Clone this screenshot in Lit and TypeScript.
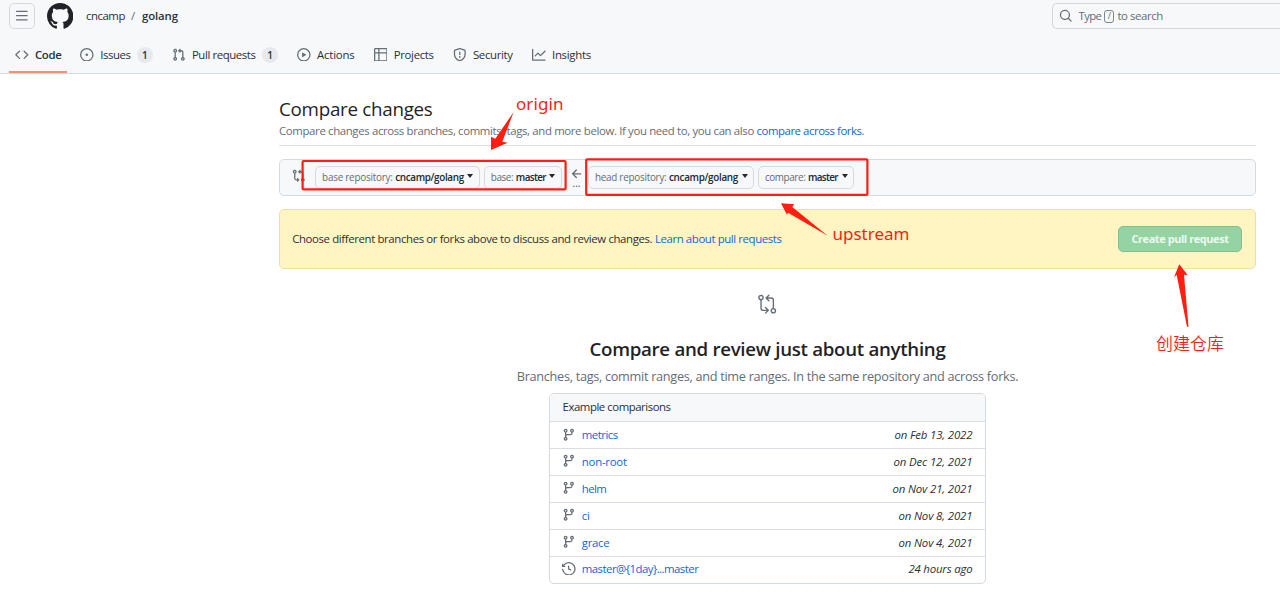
import { LitElement, html, css, svg } from "lit";
import { customElement, property } from "lit/decorators.js";

const ICONS: Record<string, string> = {
  bars: "M1 2.75A.75.75 0 0 1 1.75 2h12.5a.75.75 0 0 1 0 1.5H1.75A.75.75 0 0 1 1 2.75Zm0 5A.75.75 0 0 1 1.75 7h12.5a.75.75 0 0 1 0 1.5H1.75A.75.75 0 0 1 1 7.75ZM1.75 12h12.5a.75.75 0 0 1 0 1.5H1.75a.75.75 0 0 1 0-1.5Z",
  mark: "M8 0c4.42 0 8 3.58 8 8a8.013 8.013 0 0 1-5.45 7.59c-.4.08-.55-.17-.55-.38 0-.27.01-1.13.01-2.2 0-.75-.25-1.23-.54-1.48 1.78-.2 3.65-.88 3.65-3.95 0-.88-.31-1.59-.82-2.15.08-.2.36-1.02-.08-2.12 0 0-.67-.22-2.2.82-.64-.18-1.32-.27-2-.27-.68 0-1.36.09-2 .27-1.53-1.03-2.2-.82-2.2-.82-.44 1.1-.16 1.92-.08 2.12-.51.56-.82 1.28-.82 2.15 0 3.06 1.86 3.75 3.64 3.95-.23.2-.44.55-.51 1.07-.46.21-1.61.55-2.33-.66-.15-.24-.6-.83-1.23-.82-.67.01-.27.38.01.53.34.19.73.9.82 1.13.16.45.68 1.31 2.69.94 0 .67.01 1.3.01 1.49 0 .21-.15.45-.55.38A7.995 7.995 0 0 1 0 8c0-4.42 3.58-8 8-8Z",
  code: "M4.72 3.22a.75.75 0 0 1 1.06 1.06L2.06 8l3.72 3.72a.75.75 0 1 1-1.06 1.06L.47 8.53a.75.75 0 0 1 0-1.06l4.25-4.25zm6.56 0a.75.75 0 1 0-1.06 1.06L13.94 8l-3.72 3.72a.75.75 0 1 0 1.06 1.06l4.25-4.25a.75.75 0 0 0 0-1.06l-4.25-4.25z",
  issue: "M8 9.5a1.5 1.5 0 1 0 0-3 1.5 1.5 0 0 0 0 3ZM8 0a8 8 0 1 1 0 16A8 8 0 0 1 8 0ZM1.5 8a6.5 6.5 0 1 0 13 0 6.5 6.5 0 0 0-13 0Z",
  pull: "M1.5 3.25a2.25 2.25 0 1 1 3 2.122v5.256a2.251 2.251 0 1 1-1.5 0V5.372A2.25 2.25 0 0 1 1.5 3.25Zm5.677-.177L9.573.677A.25.25 0 0 1 10 .854V2.5h1A2.5 2.5 0 0 1 13.5 5v5.628a2.251 2.251 0 1 1-1.5 0V5a1 1 0 0 0-1-1h-1v1.646a.25.25 0 0 1-.427.177L7.177 3.427a.25.25 0 0 1 0-.354ZM3.75 2.5a.75.75 0 1 0 0 1.5.75.75 0 0 0 0-1.5Zm0 9.5a.75.75 0 1 0 0 1.5.75.75 0 0 0 0-1.5Zm8.25.75a.75.75 0 1 0 1.5 0 .75.75 0 0 0-1.5 0Z",
  play: "M8 0a8 8 0 1 1 0 16A8 8 0 0 1 8 0ZM1.5 8a6.5 6.5 0 1 0 13 0 6.5 6.5 0 0 0-13 0Zm4.879-2.773 4.264 2.559a.25.25 0 0 1 0 .428l-4.264 2.559A.25.25 0 0 1 6 10.559V5.442a.25.25 0 0 1 .379-.215Z",
  table: "M0 1.75C0 .784.784 0 1.75 0h12.5C15.216 0 16 .784 16 1.75v12.5A1.75 1.75 0 0 1 14.25 16H1.75A1.75 1.75 0 0 1 0 14.25ZM6.5 6.5v8h7.75a.25.25 0 0 0 .25-.25V6.5Zm8-1.5V1.75a.25.25 0 0 0-.25-.25H6.5V5Zm-13 1.5v7.75c0 .138.112.25.25.25H5v-8ZM5 5V1.5H1.75a.25.25 0 0 0-.25.25V5Z",
  shield: "M7.467.133a1.748 1.748 0 0 1 1.066 0l5.25 1.68A1.75 1.75 0 0 1 15 3.48V7c0 1.566-.32 3.182-1.303 4.682-.983 1.498-2.585 2.813-5.032 3.855a1.697 1.697 0 0 1-1.33 0c-2.447-1.042-4.049-2.357-5.032-3.855C1.32 10.182 1 8.566 1 7V3.48a1.75 1.75 0 0 1 1.217-1.667Zm.61 1.429a.25.25 0 0 0-.153 0l-5.25 1.68a.25.25 0 0 0-.174.238V7c0 1.358.275 2.666 1.057 3.86.784 1.194 2.121 2.34 4.366 3.297a.196.196 0 0 0 .154 0c2.245-.956 3.582-2.104 4.366-3.298C13.225 9.666 13.5 8.36 13.5 7V3.48a.251.251 0 0 0-.174-.237l-5.25-1.68ZM8.75 4.75v3a.75.75 0 0 1-1.5 0v-3a.75.75 0 0 1 1.5 0ZM9 10.5a1 1 0 1 1-2 0 1 1 0 0 1 2 0Z",
  graph: "M1.5 1.75V13.5h13.75a.75.75 0 0 1 0 1.5H.75a.75.75 0 0 1-.75-.75V1.75a.75.75 0 0 1 1.5 0Zm14.28 2.53-5.25 5.25a.75.75 0 0 1-1.06 0L7 7.06 4.28 9.78a.751.751 0 0 1-1.042-.018.751.751 0 0 1-.018-1.042l3.25-3.25a.75.75 0 0 1 1.06 0L10 7.94l4.72-4.72a.751.751 0 0 1 1.042.018.751.751 0 0 1 .018 1.042Z",
  search: "M10.68 11.74a6 6 0 0 1-7.922-8.982 6 6 0 0 1 8.982 7.922l3.04 3.04a.749.749 0 0 1-.326 1.275.749.749 0 0 1-.734-.215ZM11.5 7a4.499 4.499 0 1 0-8.997 0A4.499 4.499 0 0 0 11.5 7Z",
  compare: "M9.573.677A.25.25 0 0 1 10 .854V2.5h1A2.5 2.5 0 0 1 13.5 5v5.628a2.251 2.251 0 1 1-1.5 0V5a1 1 0 0 0-1-1h-1v1.646a.25.25 0 0 1-.427.177L7.177 3.427a.25.25 0 0 1 0-.354ZM6 12v-1.646a.25.25 0 0 1 .427-.177l2.396 2.396a.25.25 0 0 1 0 .354l-2.396 2.396A.25.25 0 0 1 6 15.146V13.5H5A2.5 2.5 0 0 1 2.5 11V5.372a2.25 2.25 0 1 1 1.5 0V11a1 1 0 0 0 1 1ZM4 3.25a.75.75 0 1 0-1.5 0 .75.75 0 0 0 1.5 0ZM12.75 12a.75.75 0 1 0 0 1.5.75.75 0 0 0 0-1.5Z",
  branch: "M9.5 3.25a2.25 2.25 0 1 1 3 2.122V6A2.5 2.5 0 0 1 10 8.5H6a1 1 0 0 0-1 1v1.128a2.251 2.251 0 1 1-1.5 0V5.372a2.25 2.25 0 1 1 1.5 0v1.836A2.493 2.493 0 0 1 6 7h4a1 1 0 0 0 1-1v-.628A2.25 2.25 0 0 1 9.5 3.25Zm-6 0a.75.75 0 1 0 1.5 0 .75.75 0 0 0-1.5 0Zm8.25-.75a.75.75 0 1 0 0 1.5.75.75 0 0 0 0-1.5ZM4.25 12a.75.75 0 1 0 0 1.5.75.75 0 0 0 0-1.5Z",
  history: "m.427 1.927 1.215 1.215a8.002 8.002 0 1 1-1.6 5.685.75.75 0 1 1 1.493-.154 6.5 6.5 0 1 0 1.18-4.458l1.358 1.358A.25.25 0 0 1 3.896 6H.25A.25.25 0 0 1 0 5.75V2.104a.25.25 0 0 1 .427-.177ZM7.75 4a.75.75 0 0 1 .75.75v2.992l2.028.812a.75.75 0 0 1-.557 1.392l-2.5-1A.751.751 0 0 1 7 8.25v-3.5A.75.75 0 0 1 7.75 4Z",
  left: "M7.78 12.53a.75.75 0 0 1-1.06 0L2.47 8.28a.75.75 0 0 1 0-1.06l4.25-4.25a.751.751 0 0 1 1.042.018.751.751 0 0 1 .018 1.042L4.81 7h7.44a.75.75 0 0 1 0 1.5H4.81l2.97 2.97a.75.75 0 0 1 0 1.06Z",
};

const icon = (name: string, size = 13.6) =>
  html`<svg class="icon" width=${size} height=${size} viewBox="0 0 16 16" fill="currentColor">${svg`<path fill-rule="evenodd" d=${ICONS[name]}></path>`}</svg>`;

/** One line of text, tracked so that it fills exactly `w` pixels. */
@customElement("fit-text")
export class FitText extends LitElement {
  static styles = css`
    :host { display: inline-block; flex: none; white-space: pre; }
  `;
  @property() text = "";
  @property({ type: Number }) w = 0;

  render() {
    return html`<span>${this.text}</span>`;
  }
  updated() {
    const span = this.renderRoot.querySelector("span")!;
    span.style.letterSpacing = "0px";
    const natural = span.getBoundingClientRect().width;
    span.style.letterSpacing = `${(this.w - natural) / this.text.length}px`;
    this.style.width = `${this.w}px`;
  }
}

const t = (text: string, w: number, cls = "") =>
  html`<fit-text class=${cls} .text=${text} .w=${w}></fit-text>`;

const TABS = [
  { icon: "code", label: "Code", w: 26.4, active: true },
  { icon: "issue", label: "Issues", w: 30, count: "1" },
  { icon: "pull", label: "Pull requests", w: 63.7, count: "1" },
  { icon: "play", label: "Actions", w: 37.4 },
  { icon: "table", label: "Projects", w: 40 },
  { icon: "shield", label: "Security", w: 39.8 },
  { icon: "graph", label: "Insights", w: 39 },
];

const EXAMPLES = [
  { icon: "branch", name: "metrics", w: 36, when: "on Feb 13, 2022", ww: 78 },
  { icon: "branch", name: "non-root", w: 45, when: "on Dec 12, 2021", ww: 79 },
  { icon: "branch", name: "helm", w: 24.5, when: "on Nov 21, 2021", ww: 80 },
  { icon: "branch", name: "ci", w: 8, when: "on Nov 8, 2021", ww: 74 },
  { icon: "branch", name: "grace", w: 27.5, when: "on Nov 4, 2021", ww: 74 },
  { icon: "history", name: "master@{1day}...master", w: 116.5, when: "24 hours ago", ww: 64 },
];

@customElement("app-root")
export class AppRoot extends LitElement {
  static styles = css`
    :host {
      display: block; position: relative; width: 1280px; height: 609px; overflow: hidden;
      background: #fff; color: #2b3036;
      font: 11.4px/18px "Open Sans", "Noto Sans", sans-serif;
    }
    * { box-sizing: border-box; }
    .icon { flex: none; display: block; }
    header { height: 74px; background: #f6f8fa; border-bottom: 1px solid #d5dbe1; display: flex; flex-direction: column; }
    .top { height: 32px; display: flex; align-items: center; padding-left: 8.8px; overflow: hidden; }
    .menu { width: 25.8px; height: 25.8px; border: 1px solid #d3d9e0; border-radius: 5px; display: grid; place-items: center; color: #656d76; }
    .logo { margin-left: 12.4px; margin-right: 12.6px; color: #1f2328; }
    .slash { margin: 0 6px; color: #656d76; }
    .bold { font-weight: 600; }
    .search { margin-left: auto; width: 227.6px; flex: none; height: 26px; border: 1px solid #d0d7de; border-right: 0; border-radius: 5px 0 0 5px; display: flex; align-items: center; padding-left: 5.8px; color: #656d76; }
    .search .icon { margin-right: 5.8px; }
    .kbd { width: 10px; height: 13px; margin: 0 3px; border: 1px solid #7d858e; border-radius: 3px; display: grid; place-items: center; font-size: 9px; line-height: 10px; }
    nav { height: 41px; display: flex; padding-left: 9px; }
    .tab { display: flex; align-items: center; gap: 6.4px; margin-right: 13.25px; padding: 4px 0 0 6px; height: 41px; }
    .tab .icon { color: #656d76; }
    .tab.active { border-bottom: 2px solid #fd8c73; padding-right: 6px; padding-top: 6px; margin-right: 7px; font-weight: 600; }
    .count { width: 15.6px; height: 16px; border-radius: 8px; background: #e6eaef; text-align: center; font-size: 10px; line-height: 16px; font-weight: 600; margin-left: .3px; }
    main { margin-left: 279px; width: 977px; padding-top: 21px; display: flex; flex-direction: column; }
    h1, h2, p { margin: 0; font-weight: 400; }
    h1 { font-size: 18.8px; line-height: 28px; height: 28px; color: #1f2328; }
    .sub { color: #656d76; height: 23px; line-height: 16px; border-bottom: 1px solid #dce1e6; display: flex; }
    .link { color: #0f66dc; }
    .range { margin-top: 13px; height: 37px; border: 1px solid #d3dae0; border-radius: 5px; background: #f6f8fa; display: flex; align-items: center; padding-left: 12.4px; color: #656d76; }
    .range > .icon { margin-top: -4px; }
    .pick { height: 23px; border: 1px solid #d6dae0; border-radius: 5px; display: flex; align-items: center; padding: 0 5.8px; font-size: 9.9px; line-height: 19px; margin-right: 3.8px; }
    .pick fit-text { margin-top: -1px; }
    .pick .bold { color: #24292f; margin-left: 2.6px; }
    .pick.first { margin-left: 9.3px; }
    .pick::after { content: ""; border: 3.7px solid transparent; border-top: 4px solid #24292f; border-bottom: 0; margin-left: 3.5px; position: relative; top: -1.5px; }
    .dir { width: 22.2px; padding-right: 1px; display: flex; flex-direction: column; align-items: center; height: 22px; }
    .dots { line-height: 8px; font-size: 10px; height: 12px; color: #424a53; margin-top: -2px; }
    .flash { margin-top: 13px; height: 60px; border: 1px solid #f0e0a0; border-radius: 5px; background: #fff5c2; display: flex; align-items: center; padding: 0 13px 0 12.2px; }
    .flash .link { margin-left: 2.8px; }
    .create { margin-left: auto; width: 124px; height: 26px; border: 1px solid #84bf91; border-radius: 5px; background: #94d3a2; color: #edf9f0; display: grid; place-items: center; font: 700 11px/18px "Open Sans", sans-serif; padding: 0 0 1px; }
    .blank { display: flex; flex-direction: column; align-items: center; padding-top: 25px; color: #656d76; }
    h2 { margin-top: 20px; font-size: 18.7px; line-height: 30px; font-weight: 600; color: #1f2328; }
    .lead { margin-top: 2px; font-size: 12.7px; line-height: 20px; }
    .list { width: 437px; height: 191px; margin-top: 7px; border: 1px solid #d3dae0; border-radius: 5px; color: #2b3036; display: grid; grid-template-rows: 27px repeat(4, 27px 26.6px) ; grid-auto-rows: 27px; overflow: hidden; }
    .head { background: #f6f8fa; padding: 4px 12.6px; }
    .row { border-top: 1px solid #d8dee4; display: flex; align-items: center; padding: 0 12.6px 0 12.2px; }
    .row .icon { color: #656d76; margin: -2px 6px 0 0; }
    .when { margin-left: auto; font-style: italic; }
    .marks { position: absolute; left: 0; top: 0; }
    .note { position: absolute; color: #fa1e14; font: 17px/22px "Noto Sans", "Noto Sans CJK SC", sans-serif; }
    .n1 { left: 516px; top: 93px; }
    .n2 { left: 832.5px; top: 223px; }
    .n3 { left: 1156px; top: 332px; font: 350 17px/22px "Noto Sans CJK SC", sans-serif; }
  `;

  private pick(label: string, lw: number, value: string, vw: number, first = false) {
    return html`<div class="pick ${first ? "first" : ""}">${t(label, lw)}${t(value, vw, "bold")}</div>`;
  }

  render() {
    return html`
      <header>
        <div class="top">
          <div class="menu">${icon("bars")}</div>
          <div class="logo">${icon("mark", 26.4)}</div>
          ${t("cncamp", 39)}${t("/", 5, "slash")}${t("golang", 36, "bold")}
          <div class="search">${icon("search")}${t("Type", 22.8)}<span class="kbd">/</span>${t("to search", 45.5)}</div>
        </div>
        <nav>
          ${TABS.map((tab) => html`<div class="tab ${tab.active ? "active" : ""}">
            ${icon(tab.icon)}${t(tab.label, tab.w)}${tab.count ? html`<span class="count">${tab.count}</span>` : ""}
          </div>`)}
        </nav>
      </header>
      <main>
        <h1>${t("Compare changes", 153.5)}</h1>
        <p class="sub">${t("Compare changes across branches, commits, tags, and more below. If you need to, you can also ", 477.5)}${t("compare across forks", 105, "link")}${t(".", 3)}</p>
        <div class="range">
          ${icon("compare")}
          ${this.pick("base repository:", 70.5, "cncamp/golang", 68.7, true)}
          ${this.pick("base:", 22.5, "master", 30)}
          <div class="dir">${icon("left", 14)}${t("...", 8, "dots")}</div>
          ${this.pick("head repository:", 71.5, "cncamp/golang", 69)}
          ${this.pick("compare:", 40.5, "master", 30)}
        </div>
        <div class="flash">
          ${t("Choose different branches or forks above to discuss and review changes.", 360)}
          ${t("Learn about pull requests", 126.5, "link")}
          <button class="create">${t("Create pull request", 97)}</button>
        </div>
        <section class="blank">
          <svg class="icon" width="20.4" height="20.4" viewBox="0 0 24 24" fill="none" stroke="currentColor" stroke-width="1.6" stroke-linecap="round" stroke-linejoin="round">
            <circle cx="4.75" cy="4.25" r="2.5"></circle><circle cx="19.25" cy="19.75" r="2.5"></circle>
            <path d="M4.75 6.75v10a2.5 2.5 0 0 0 2.5 2.5H13M10 16l3.3 3.25L10 22.5M19.25 17.25v-10a2.5 2.5 0 0 0-2.5-2.5H11M14 1.5l-3.3 3.25L14 8"></path>
          </svg>
          <h2>${t("Compare and review just about anything", 356)}</h2>
          <p class="lead">${t("Branches, tags, commit ranges, and time ranges. In the same repository and across forks.", 501.5)}</p>
          <div class="list">
            <div class="head">${t("Example comparisons", 108)}</div>
            ${EXAMPLES.map((e) => html`<div class="row">${icon(e.icon)}${t(e.name, e.w, "link")}${t(e.when, e.ww, "when")}</div>`)}
          </div>
        </section>
      </main>
      <svg class="marks" width="1280" height="609" viewBox="0 0 1280 609" fill="#ff1e10">
        <g fill="none" stroke="#ff1e10" stroke-width="2.2">
          <rect x="302.6" y="161" width="263" height="28.4" rx="1"></rect>
          <rect x="586.2" y="159.3" width="281.2" height="35.6" rx="1"></rect>
        </g>
        <path d="M491 150V136.7L495.3 138.7L513.7 112L502.3 141.7L507.7 142.7Z"></path>
        <path d="M781 203.3L794.3 204.3L792.3 207L827.7 235.7L788 212.7L787 214.7Z"></path>
        <path d="M1179.3 264.3L1187.7 275L1184 274.7L1188.5 326.7H1187L1176.7 275L1174 277.3Z"></path>
      </svg>
      <div class="note n1">${t("origin", 47.5)}</div>
      <div class="note n2">${t("upstream", 77)}</div>
      <div class="note n3">${t("创建仓库", 68)}</div>
    `;
  }
}
